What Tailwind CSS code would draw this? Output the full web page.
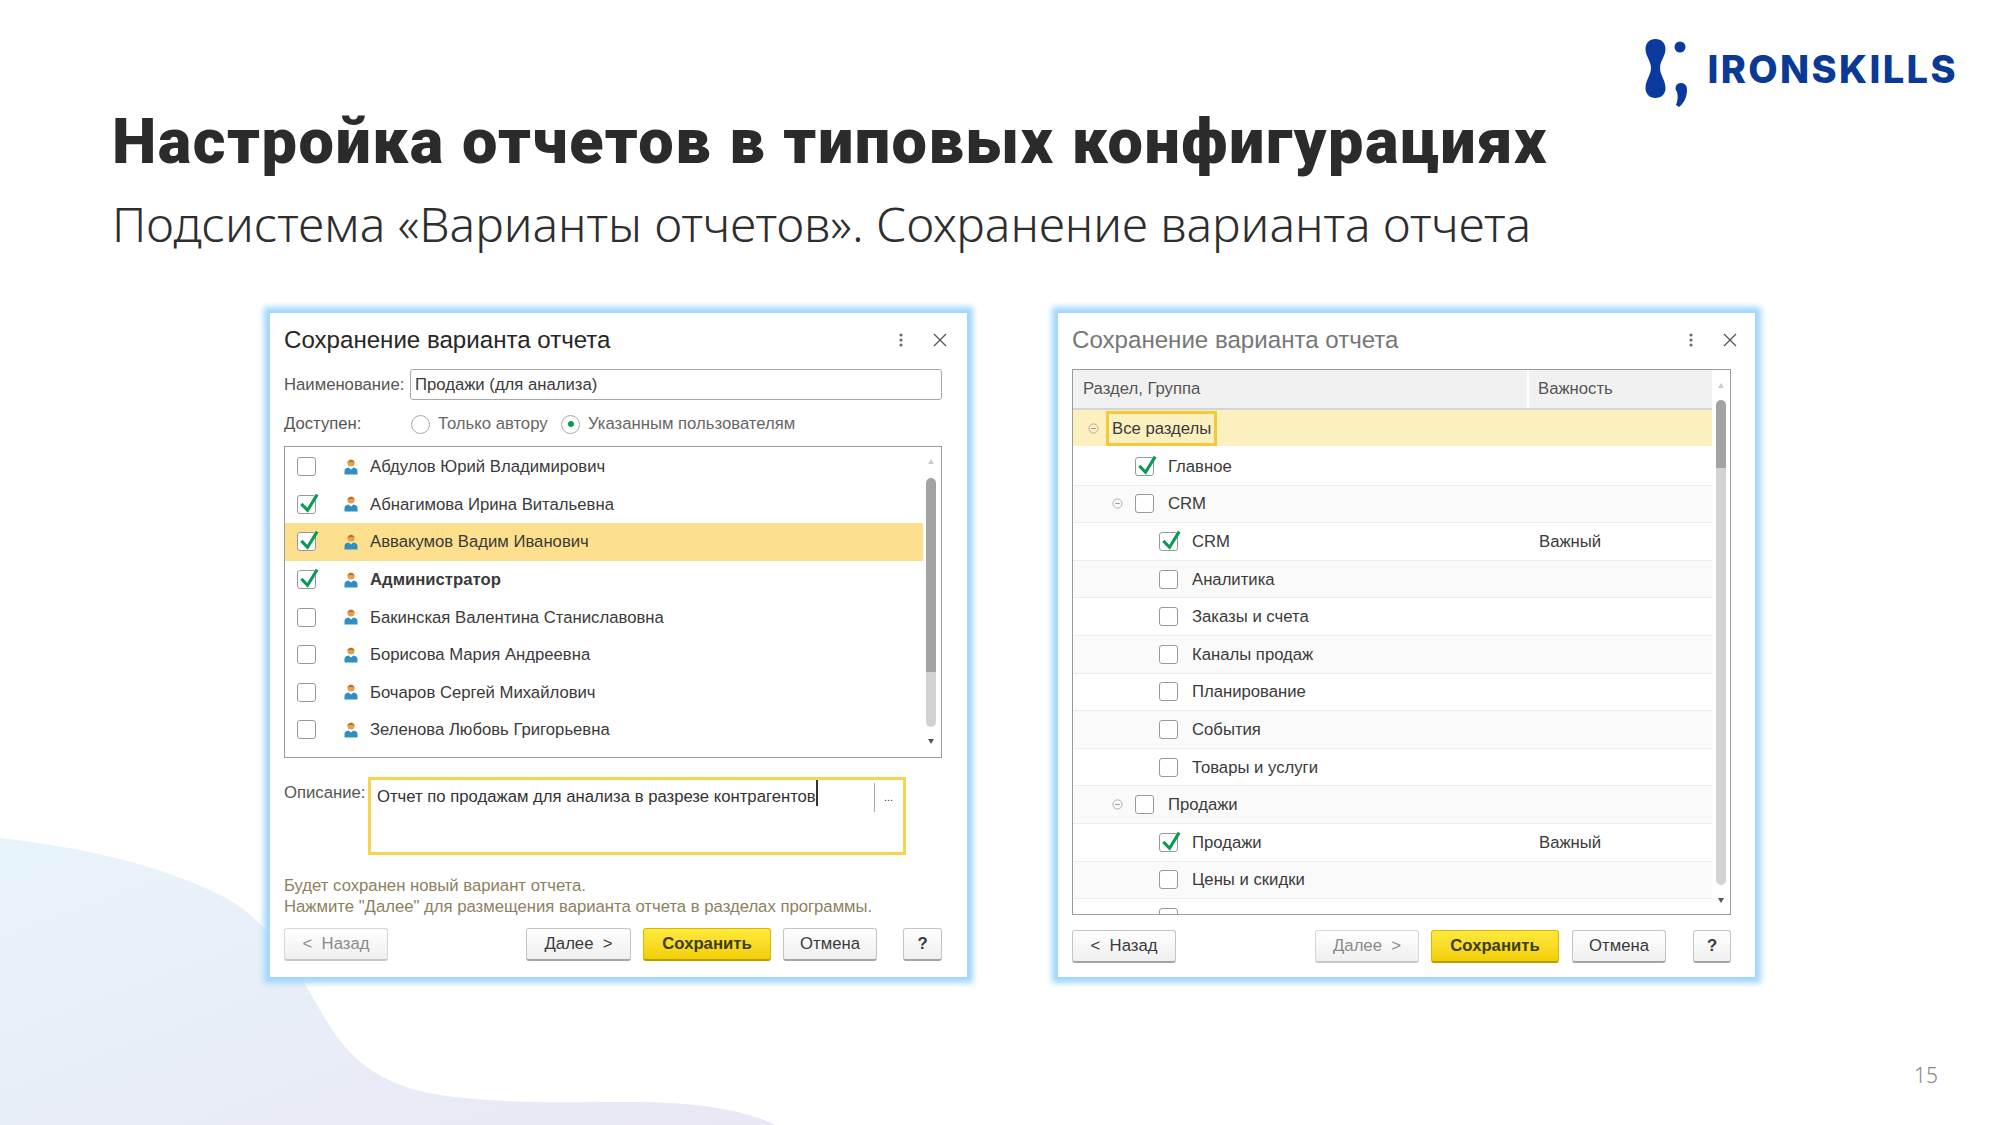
<!DOCTYPE html>
<html lang="ru">
<head>
    <meta charset="UTF-8">
    <title>Настройка отчетов</title>
    <script src="https://cdn.jsdelivr.net/npm/@tailwindcss/browser@4"></script>
</head>
<body class="bg-white">
<svg class="hidden">
    <symbol id="person" viewBox="0 0 14 16">
        <circle cx="7" cy="4" r="3.6" fill="#e3a04e"/>
        <path d="M3.4 3.6 Q7 -1.5 10.6 3.6 Q7 1.8 3.4 3.6 Z" fill="#a8662a"/>
        <path d="M0.5 15.5 V12 Q0.5 9.2 4.6 8.6 L7 10.6 L9.4 8.6 Q13.5 9.2 13.5 12 V15.5 Z" fill="#2f8fc0"/>
    </symbol>
    <symbol id="check" viewBox="0 0 24 26">
        <path d="M4.7 15 L11.5 22 L22 5" fill="none" stroke="#0d9a56" stroke-width="3.4"/>
    </symbol>
    <symbol id="minus" viewBox="0 0 12 12">
        <circle cx="6" cy="6" r="5" fill="none" stroke="#a8a8a8"/>
        <path d="M3.5 6 H8.5" stroke="#909090"/>
    </symbol>
    <symbol id="dots" viewBox="0 0 4 14">
        <circle cx="2" cy="2" r="1.5" fill="#666"/><circle cx="2" cy="7" r="1.5" fill="#666"/><circle cx="2" cy="12" r="1.5" fill="#666"/>
    </symbol>
    <symbol id="close" viewBox="0 0 14 14">
        <path d="M1 1 L13 13 M13 1 L1 13" stroke="#555" stroke-width="1.3"/>
    </symbol>
</svg>

<div class="relative w-[2000px] h-[1125px] overflow-hidden font-['Liberation_Sans',sans-serif]">
    <!-- background wave -->
    <svg class="absolute left-0 bottom-0" width="800" height="300" viewBox="0 825 800 300">
        <defs>
            <linearGradient id="wave" x1="0" y1="0" x2="1" y2="1">
                <stop offset="0" stop-color="#e7f4fa"/>
                <stop offset="1" stop-color="#e9e7f4"/>
            </linearGradient>
        </defs>
        <path d="M0 838 C90 848 170 868 230 900 C270 925 295 965 320 1010 C345 1055 375 1085 440 1095 C500 1104 560 1102 630 1102 C690 1102 740 1108 776 1125 L0 1125 Z" fill="url(#wave)"/>
    </svg>

    <div class="relative flex flex-col h-full">
        <!-- logo -->
        <div class="flex justify-end items-start pt-[38px] pr-[44px] h-[108px]">
            <svg width="46" height="72" viewBox="0 0 46 72">
                <path d="M10.5 1 C16.5 1 20.5 5 20.5 11 C20.5 18 15 23 15 30 C15 37 20.5 42 20.5 50 C20.5 56 16.5 60 10.5 60 C4.5 60 0.5 56 0.5 50 C0.5 42 6 37 6 30 C6 23 0.5 18 0.5 11 C0.5 5 4.5 1 10.5 1 Z" fill="#0a3aa0"/>
                <circle cx="35" cy="9" r="5.5" fill="#0a3aa0"/>
                <path d="M36 45 C40 45 42 48 42 52 C42 59 39 65 34 69 L31 67 C33 62 33 58 32 54 C29 50 31 45 36 45 Z" fill="#0a3aa0"/>
            </svg>
            <span class="ml-[16px] mt-[9px] text-[38px] leading-[44px] font-extrabold tracking-[2.4px] mr-[-2px] text-[#0a3a96] font-['Inter',sans-serif]">IRONSKILLS</span>
        </div>

        <!-- headings -->
        <h1 class="pl-[112px] text-[63px] leading-[68px] font-black tracking-[1.5px] text-[#2b2b2b] font-['Roboto',sans-serif]">Настройка отчетов в типовых конфигурациях</h1>
        <p class="pl-[112px] mt-[18px] text-[48px] leading-[60px] font-light text-[#2e2e2e] font-['Noto_Sans',sans-serif]">Подсистема «Варианты отчетов». Сохранение варианта отчета</p>

        <!-- dialogs -->
        <div class="flex gap-[91px] pl-[270px] mt-[59px]">
            <!-- first step -->
            <div class="w-[697px] h-[664px] bg-white pl-[14px] pr-[25px] shadow-[0_0_6px_6px_#9fd6ff] text-[16.7px] text-[#3a3a3a]">
                <div class="flex items-center h-[54px]">
                    <span class="text-[24.1px] text-[#262626]">Сохранение варианта отчета</span>
                    <svg class="ml-auto w-[4px] h-[14px]"><use href="#dots"/></svg>
                    <svg class="ml-[30px] mr-[-5px] w-[14px] h-[14px]"><use href="#close"/></svg>
                </div>
                <div class="flex items-center h-[31px] mt-[2px]">
                    <span class="w-[126px] text-[#555]">Наименование:</span>
                    <div class="flex-1 h-full flex items-center pl-[4px] border border-[#a8a8a8] rounded-[3px]">Продажи (для анализа)</div>
                </div>
                <div class="flex items-center h-[32px] mt-[8px] text-[#666]">
                    <span class="w-[127px] text-[#555]">Доступен:</span>
                    <span class="w-[19px] h-[19px] rounded-full border border-[#aaa]"></span>
                    <span class="ml-[8px] w-[123px]">Только автору</span>
                    <span class="w-[19px] h-[19px] rounded-full border border-[#aaa] flex items-center justify-center"><span class="w-[6px] h-[6px] rounded-full bg-[#0d9a56]"></span></span>
                    <span class="ml-[8px]">Указанным пользователям</span>
                </div>
                <div class="flex h-[312px] mt-[6px] border border-[#9a9a9a] pt-[1px]">
                    <div class="w-[638px]">
                        <div class="flex items-center h-[37.6px] pl-[12px]">
                            <span class="w-[19px] h-[19px] rounded-[3px] border border-[#999] bg-white"></span>
                            <svg class="ml-[28px] w-[14px] h-[16px]"><use href="#person"/></svg>
                            <span class="ml-[12px]">Абдулов Юрий Владимирович</span>
                        </div>
                        <div class="flex items-center h-[37.6px] pl-[12px]">
                            <span class="relative w-[19px] h-[19px] rounded-[3px] border border-[#999] bg-white"><svg class="absolute left-[-1px] top-[-6px] w-[22px] h-[24px]"><use href="#check"/></svg></span>
                            <svg class="ml-[28px] w-[14px] h-[16px]"><use href="#person"/></svg>
                            <span class="ml-[12px]">Абнагимова Ирина Витальевна</span>
                        </div>
                        <div class="flex items-center h-[37.6px] pl-[12px] bg-[#fde08d]">
                            <span class="relative w-[19px] h-[19px] rounded-[3px] border border-[#999] bg-white"><svg class="absolute left-[-1px] top-[-6px] w-[22px] h-[24px]"><use href="#check"/></svg></span>
                            <svg class="ml-[28px] w-[14px] h-[16px]"><use href="#person"/></svg>
                            <span class="ml-[12px]">Аввакумов Вадим Иванович</span>
                        </div>
                        <div class="flex items-center h-[37.6px] pl-[12px]">
                            <span class="relative w-[19px] h-[19px] rounded-[3px] border border-[#999] bg-white"><svg class="absolute left-[-1px] top-[-6px] w-[22px] h-[24px]"><use href="#check"/></svg></span>
                            <svg class="ml-[28px] w-[14px] h-[16px]"><use href="#person"/></svg>
                            <span class="ml-[12px] font-bold">Администратор</span>
                        </div>
                        <div class="flex items-center h-[37.6px] pl-[12px]">
                            <span class="w-[19px] h-[19px] rounded-[3px] border border-[#999] bg-white"></span>
                            <svg class="ml-[28px] w-[14px] h-[16px]"><use href="#person"/></svg>
                            <span class="ml-[12px]">Бакинская Валентина Станиславовна</span>
                        </div>
                        <div class="flex items-center h-[37.6px] pl-[12px]">
                            <span class="w-[19px] h-[19px] rounded-[3px] border border-[#999] bg-white"></span>
                            <svg class="ml-[28px] w-[14px] h-[16px]"><use href="#person"/></svg>
                            <span class="ml-[12px]">Борисова Мария Андреевна</span>
                        </div>
                        <div class="flex items-center h-[37.6px] pl-[12px]">
                            <span class="w-[19px] h-[19px] rounded-[3px] border border-[#999] bg-white"></span>
                            <svg class="ml-[28px] w-[14px] h-[16px]"><use href="#person"/></svg>
                            <span class="ml-[12px]">Бочаров Сергей Михайлович</span>
                        </div>
                        <div class="flex items-center h-[37.6px] pl-[12px]">
                            <span class="w-[19px] h-[19px] rounded-[3px] border border-[#999] bg-white"></span>
                            <svg class="ml-[28px] w-[14px] h-[16px]"><use href="#person"/></svg>
                            <span class="ml-[12px]">Зеленова Любовь Григорьевна</span>
                        </div>
                    </div>
                    <!-- scrollbar -->
                    <div class="flex flex-col items-center w-[18px] ml-[-1px]">
                        <span class="mt-[11px] w-0 h-0 border-x-[3px] border-x-transparent border-b-[5px] border-b-[#ccc]"></span>
                        <span class="mt-[14px] w-[10px] h-[194px] rounded-t-[5px] bg-[#a3a3a3]"></span>
                        <span class="w-[10px] h-[55px] rounded-b-[5px] bg-[#d2d2d2]"></span>
                        <span class="mt-[12px] w-0 h-0 border-x-[3px] border-x-transparent border-t-[5px] border-t-[#555]"></span>
                    </div>
                </div>
                <div class="flex h-[78px] mt-[19px]">
                    <span class="w-[84px] pt-[3px] text-[#555]">Описание:</span>
                    <div class="flex w-[538px] h-full border-[3px] border-[#f6d44f]">
                        <span class="pl-[6px] pt-[7px] h-[26px] text-[#333] border-r-2 border-r-[#333] leading-[20px]">Отчет по продажам для анализа в разрезе контрагентов</span>
                        <span class="ml-auto mt-[3px] w-[29px] h-[29px] pl-[9px] border-l border-[#aaa] text-[11px] leading-[28px]">...</span>
                    </div>
                </div>
                <div class="mt-[20px] text-[#8d7f60] leading-[21px]">
                    <p>Будет сохранен новый вариант отчета.</p>
                    <p>Нажмите "Далее" для размещения варианта отчета в разделах программы.</p>
                </div>
                <div class="flex h-[33px] mt-[11px]">
                    <span class="flex items-center justify-center w-[104px] border border-[#d6d6d6] border-b-2 border-b-[#c8c8c8] rounded-[3px] bg-linear-to-b from-white to-[#efefef] text-[#8a8a8a]">&lt;&nbsp; Назад</span>
                    <span class="flex items-center justify-center ml-[138px] w-[105px] border border-[#c4c4c4] border-b-2 border-b-[#a5a5a5] rounded-[3px] bg-linear-to-b from-white to-[#efefef]">Далее &nbsp;&gt;</span>
                    <span class="flex items-center justify-center ml-[12px] w-[128px] border border-[#d8b800] border-b-2 border-b-[#b89c00] rounded-[3px] bg-linear-to-b from-[#ffe93a] to-[#f3cf00] font-bold text-[#3d3d10]">Сохранить</span>
                    <span class="flex items-center justify-center ml-[12px] w-[94px] border border-[#c4c4c4] border-b-2 border-b-[#a5a5a5] rounded-[3px] bg-linear-to-b from-white to-[#efefef]">Отмена</span>
                    <span class="flex items-center justify-center ml-[26px] w-[39px] border border-[#c4c4c4] border-b-2 border-b-[#a5a5a5] rounded-[3px] bg-linear-to-b from-white to-[#efefef] font-bold">?</span>
                </div>
            </div>

            <!-- second step -->
            <div class="w-[697px] h-[664px] bg-white pl-[14px] pr-[24px] shadow-[0_0_6px_6px_#9fd6ff] text-[16.7px] text-[#3a3a3a]">
                <div class="flex items-center h-[54px]">
                    <span class="text-[24.1px] text-[#777]">Сохранение варианта отчета</span>
                    <svg class="ml-auto w-[4px] h-[14px]"><use href="#dots"/></svg>
                    <svg class="ml-[30px] mr-[-6px] w-[14px] h-[14px]"><use href="#close"/></svg>
                </div>
                <div class="flex h-[546px] mt-[2px] border border-[#9a9a9a] overflow-hidden">
                    <div class="w-[639px] shrink-0">
                        <div class="flex h-[40px] bg-[#f1f1f1] border-b-2 border-b-[#d4d4d4] text-[#555]">
                            <span class="flex items-center w-[456px] pl-[10px] border-r-2 border-r-white">Раздел, Группа</span>
                            <span class="flex items-center pl-[9px]">Важность</span>
                        </div>
                        <div class="flex items-center h-[38px] bg-[#fdf0bf] border-b-2 border-b-white">
                            <svg class="ml-[15px] w-[11px] h-[11px]"><use href="#minus"/></svg>
                            <span class="flex items-center ml-[7px] mt-[1px] h-[35px] px-[3px] border-[3px] border-[#f5c93c]">Все разделы</span>
                        </div>
                        <div class="flex items-center h-[37.6px] pl-[62px] border-b border-b-[#ececec]">
                            <span class="relative w-[19px] h-[19px] rounded-[3px] border border-[#999]"><svg class="absolute left-[-1px] top-[-6px] w-[22px] h-[24px]"><use href="#check"/></svg></span>
                            <span class="ml-[14px]">Главное</span>
                        </div>
                        <div class="flex items-center h-[37.6px] pl-[39px] bg-[#fafafa] border-b border-b-[#ececec]">
                            <svg class="w-[11px] h-[11px]"><use href="#minus"/></svg>
                            <span class="ml-[12px] w-[19px] h-[19px] rounded-[3px] border border-[#999] bg-white"></span>
                            <span class="ml-[14px]">CRM</span>
                        </div>
                        <div class="flex items-center h-[37.6px] pl-[86px] border-b border-b-[#ececec]">
                            <span class="relative w-[19px] h-[19px] rounded-[3px] border border-[#999]"><svg class="absolute left-[-1px] top-[-6px] w-[22px] h-[24px]"><use href="#check"/></svg></span>
                            <span class="ml-[14px] w-[347px]">CRM</span>
                            <span>Важный</span>
                        </div>
                        <div class="flex items-center h-[37.6px] pl-[86px] bg-[#fafafa] border-b border-b-[#ececec]">
                            <span class="w-[19px] h-[19px] rounded-[3px] border border-[#999] bg-white"></span>
                            <span class="ml-[14px]">Аналитика</span>
                        </div>
                        <div class="flex items-center h-[37.6px] pl-[86px] border-b border-b-[#ececec]">
                            <span class="w-[19px] h-[19px] rounded-[3px] border border-[#999] bg-white"></span>
                            <span class="ml-[14px]">Заказы и счета</span>
                        </div>
                        <div class="flex items-center h-[37.6px] pl-[86px] bg-[#fafafa] border-b border-b-[#ececec]">
                            <span class="w-[19px] h-[19px] rounded-[3px] border border-[#999] bg-white"></span>
                            <span class="ml-[14px]">Каналы продаж</span>
                        </div>
                        <div class="flex items-center h-[37.6px] pl-[86px] border-b border-b-[#ececec]">
                            <span class="w-[19px] h-[19px] rounded-[3px] border border-[#999] bg-white"></span>
                            <span class="ml-[14px]">Планирование</span>
                        </div>
                        <div class="flex items-center h-[37.6px] pl-[86px] bg-[#fafafa] border-b border-b-[#ececec]">
                            <span class="w-[19px] h-[19px] rounded-[3px] border border-[#999] bg-white"></span>
                            <span class="ml-[14px]">События</span>
                        </div>
                        <div class="flex items-center h-[37.6px] pl-[86px] border-b border-b-[#ececec]">
                            <span class="w-[19px] h-[19px] rounded-[3px] border border-[#999] bg-white"></span>
                            <span class="ml-[14px]">Товары и услуги</span>
                        </div>
                        <div class="flex items-center h-[37.6px] pl-[39px] bg-[#fafafa] border-b border-b-[#ececec]">
                            <svg class="w-[11px] h-[11px]"><use href="#minus"/></svg>
                            <span class="ml-[12px] w-[19px] h-[19px] rounded-[3px] border border-[#999] bg-white"></span>
                            <span class="ml-[14px]">Продажи</span>
                        </div>
                        <div class="flex items-center h-[37.6px] pl-[86px] border-b border-b-[#ececec]">
                            <span class="relative w-[19px] h-[19px] rounded-[3px] border border-[#999]"><svg class="absolute left-[-1px] top-[-6px] w-[22px] h-[24px]"><use href="#check"/></svg></span>
                            <span class="ml-[14px] w-[347px]">Продажи</span>
                            <span>Важный</span>
                        </div>
                        <div class="flex items-center h-[37.6px] pl-[86px] bg-[#fafafa] border-b border-b-[#ececec]">
                            <span class="w-[19px] h-[19px] rounded-[3px] border border-[#999] bg-white"></span>
                            <span class="ml-[14px]">Цены и скидки</span>
                        </div>
                        <div class="flex items-start h-[37.6px] pl-[86px] pt-[9px]">
                            <span class="w-[19px] h-[19px] rounded-[3px] border border-[#999] bg-white"></span>
                            <span class="ml-[14px]">Р</span>
                        </div>
                    </div>
                    <!-- scrollbar -->
                    <div class="flex flex-col items-center w-[17px]">
                        <span class="mt-[13px] w-0 h-0 border-x-[3px] border-x-transparent border-b-[5px] border-b-[#ccc]"></span>
                        <span class="mt-[12px] w-[10px] h-[68px] rounded-t-[5px] bg-[#a3a3a3]"></span>
                        <span class="w-[10px] h-[417px] rounded-b-[5px] bg-[#d2d2d2]"></span>
                        <span class="mt-[13px] w-0 h-0 border-x-[3px] border-x-transparent border-t-[5px] border-t-[#555]"></span>
                    </div>
                </div>
                <div class="flex h-[33px] mt-[15px]">
                    <span class="flex items-center justify-center w-[104px] border border-[#c4c4c4] border-b-2 border-b-[#a5a5a5] rounded-[3px] bg-linear-to-b from-white to-[#efefef]">&lt;&nbsp; Назад</span>
                    <span class="flex items-center justify-center ml-[139px] w-[104px] border border-[#d6d6d6] border-b-2 border-b-[#c8c8c8] rounded-[3px] bg-linear-to-b from-white to-[#efefef] text-[#8a8a8a]">Далее &nbsp;&gt;</span>
                    <span class="flex items-center justify-center ml-[12px] w-[128px] border border-[#d8b800] border-b-2 border-b-[#b89c00] rounded-[3px] bg-linear-to-b from-[#ffe93a] to-[#f3cf00] font-bold text-[#3d3d10]">Сохранить</span>
                    <span class="flex items-center justify-center ml-[13px] w-[94px] border border-[#c4c4c4] border-b-2 border-b-[#a5a5a5] rounded-[3px] bg-linear-to-b from-white to-[#efefef]">Отмена</span>
                    <span class="flex items-center justify-center ml-[27px] w-[38px] border border-[#c4c4c4] border-b-2 border-b-[#a5a5a5] rounded-[3px] bg-linear-to-b from-white to-[#efefef] font-bold">?</span>
                </div>
            </div>
        </div>

        <div class="flex justify-end pr-[62px] mt-[84px] text-[21px] leading-[28px] font-light text-[#888] font-['Noto_Sans',sans-serif]">15</div>
    </div>
</div>
</body>
</html>
